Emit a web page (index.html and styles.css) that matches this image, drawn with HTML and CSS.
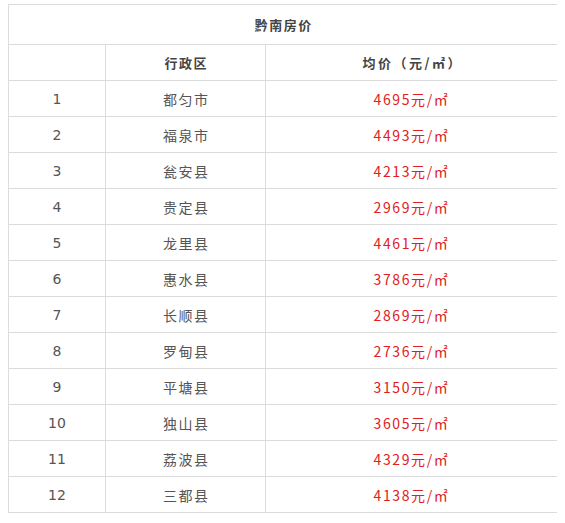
FILE: index.html
```html
<!DOCTYPE html>
<html lang="zh">
<head>
<meta charset="utf-8">
<link rel="stylesheet" href="styles.css">
</head>
<body>
<table class="price-table">
  <colgroup><col class="c1"><col class="c2"><col class="c3"></colgroup>
  <tr class="title-row"><th colspan="3">黔南房价</th></tr>
  <tr class="head-row"><th></th><th>行政区</th><th class="h3">均价（元/㎡）</th></tr>
  <tr><td class="num">1</td><td class="name">都匀市</td><td class="price">4695元/㎡</td></tr>
  <tr><td class="num">2</td><td class="name">福泉市</td><td class="price">4493元/㎡</td></tr>
  <tr><td class="num">3</td><td class="name">瓮安县</td><td class="price">4213元/㎡</td></tr>
  <tr><td class="num">4</td><td class="name">贵定县</td><td class="price">2969元/㎡</td></tr>
  <tr><td class="num">5</td><td class="name">龙里县</td><td class="price">4461元/㎡</td></tr>
  <tr><td class="num">6</td><td class="name">惠水县</td><td class="price">3786元/㎡</td></tr>
  <tr><td class="num">7</td><td class="name">长顺县</td><td class="price">2869元/㎡</td></tr>
  <tr><td class="num">8</td><td class="name">罗甸县</td><td class="price">2736元/㎡</td></tr>
  <tr><td class="num">9</td><td class="name">平塘县</td><td class="price">3150元/㎡</td></tr>
  <tr><td class="num">10</td><td class="name">独山县</td><td class="price">3605元/㎡</td></tr>
  <tr><td class="num">11</td><td class="name">荔波县</td><td class="price">4329元/㎡</td></tr>
  <tr><td class="num">12</td><td class="name">三都县</td><td class="price">4138元/㎡</td></tr>
</table>
</body>
</html>
```
FILE: styles.css
```css
html, body {
  background: #fff;
}
body {
  margin: 4px 8px;
  font-family: "Noto Sans CJK SC", "Noto Sans", sans-serif;
  font-size: 14px;
  color: #555;
}
.price-table {
  border-collapse: collapse;
  width: 549px;
  table-layout: fixed;
}
.c1 { width: 97px; }
.c2 { width: 160px; }
.c3 { width: 292px; }
.price-table th,
.price-table td {
  border: 1px solid #dcdcdc;
  padding: 0;
  text-align: center;
  vertical-align: middle;
  height: 35px;
  line-height: 20px;
}
.title-row th {
  height: 39px;
  font-size: 13px;
  font-weight: bold;
  color: #444;
  letter-spacing: 1.5px;
  text-indent: 1.5px;
}
.head-row th {
  font-size: 13px;
  font-weight: bold;
  color: #444;
  letter-spacing: 1.5px;
  text-indent: 1.5px;
}
.head-row .h3 { letter-spacing: 2.5px; text-indent: 2.5px; }
.num {
  color: #555;
  font-family: "DejaVu Sans", sans-serif;
  font-size: 14px;
}
.name {
  color: #555;
  letter-spacing: 1.5px;
  text-indent: 1.5px;
}
.price {
  color: #e02020;
  letter-spacing: 1.6px;
}
```
